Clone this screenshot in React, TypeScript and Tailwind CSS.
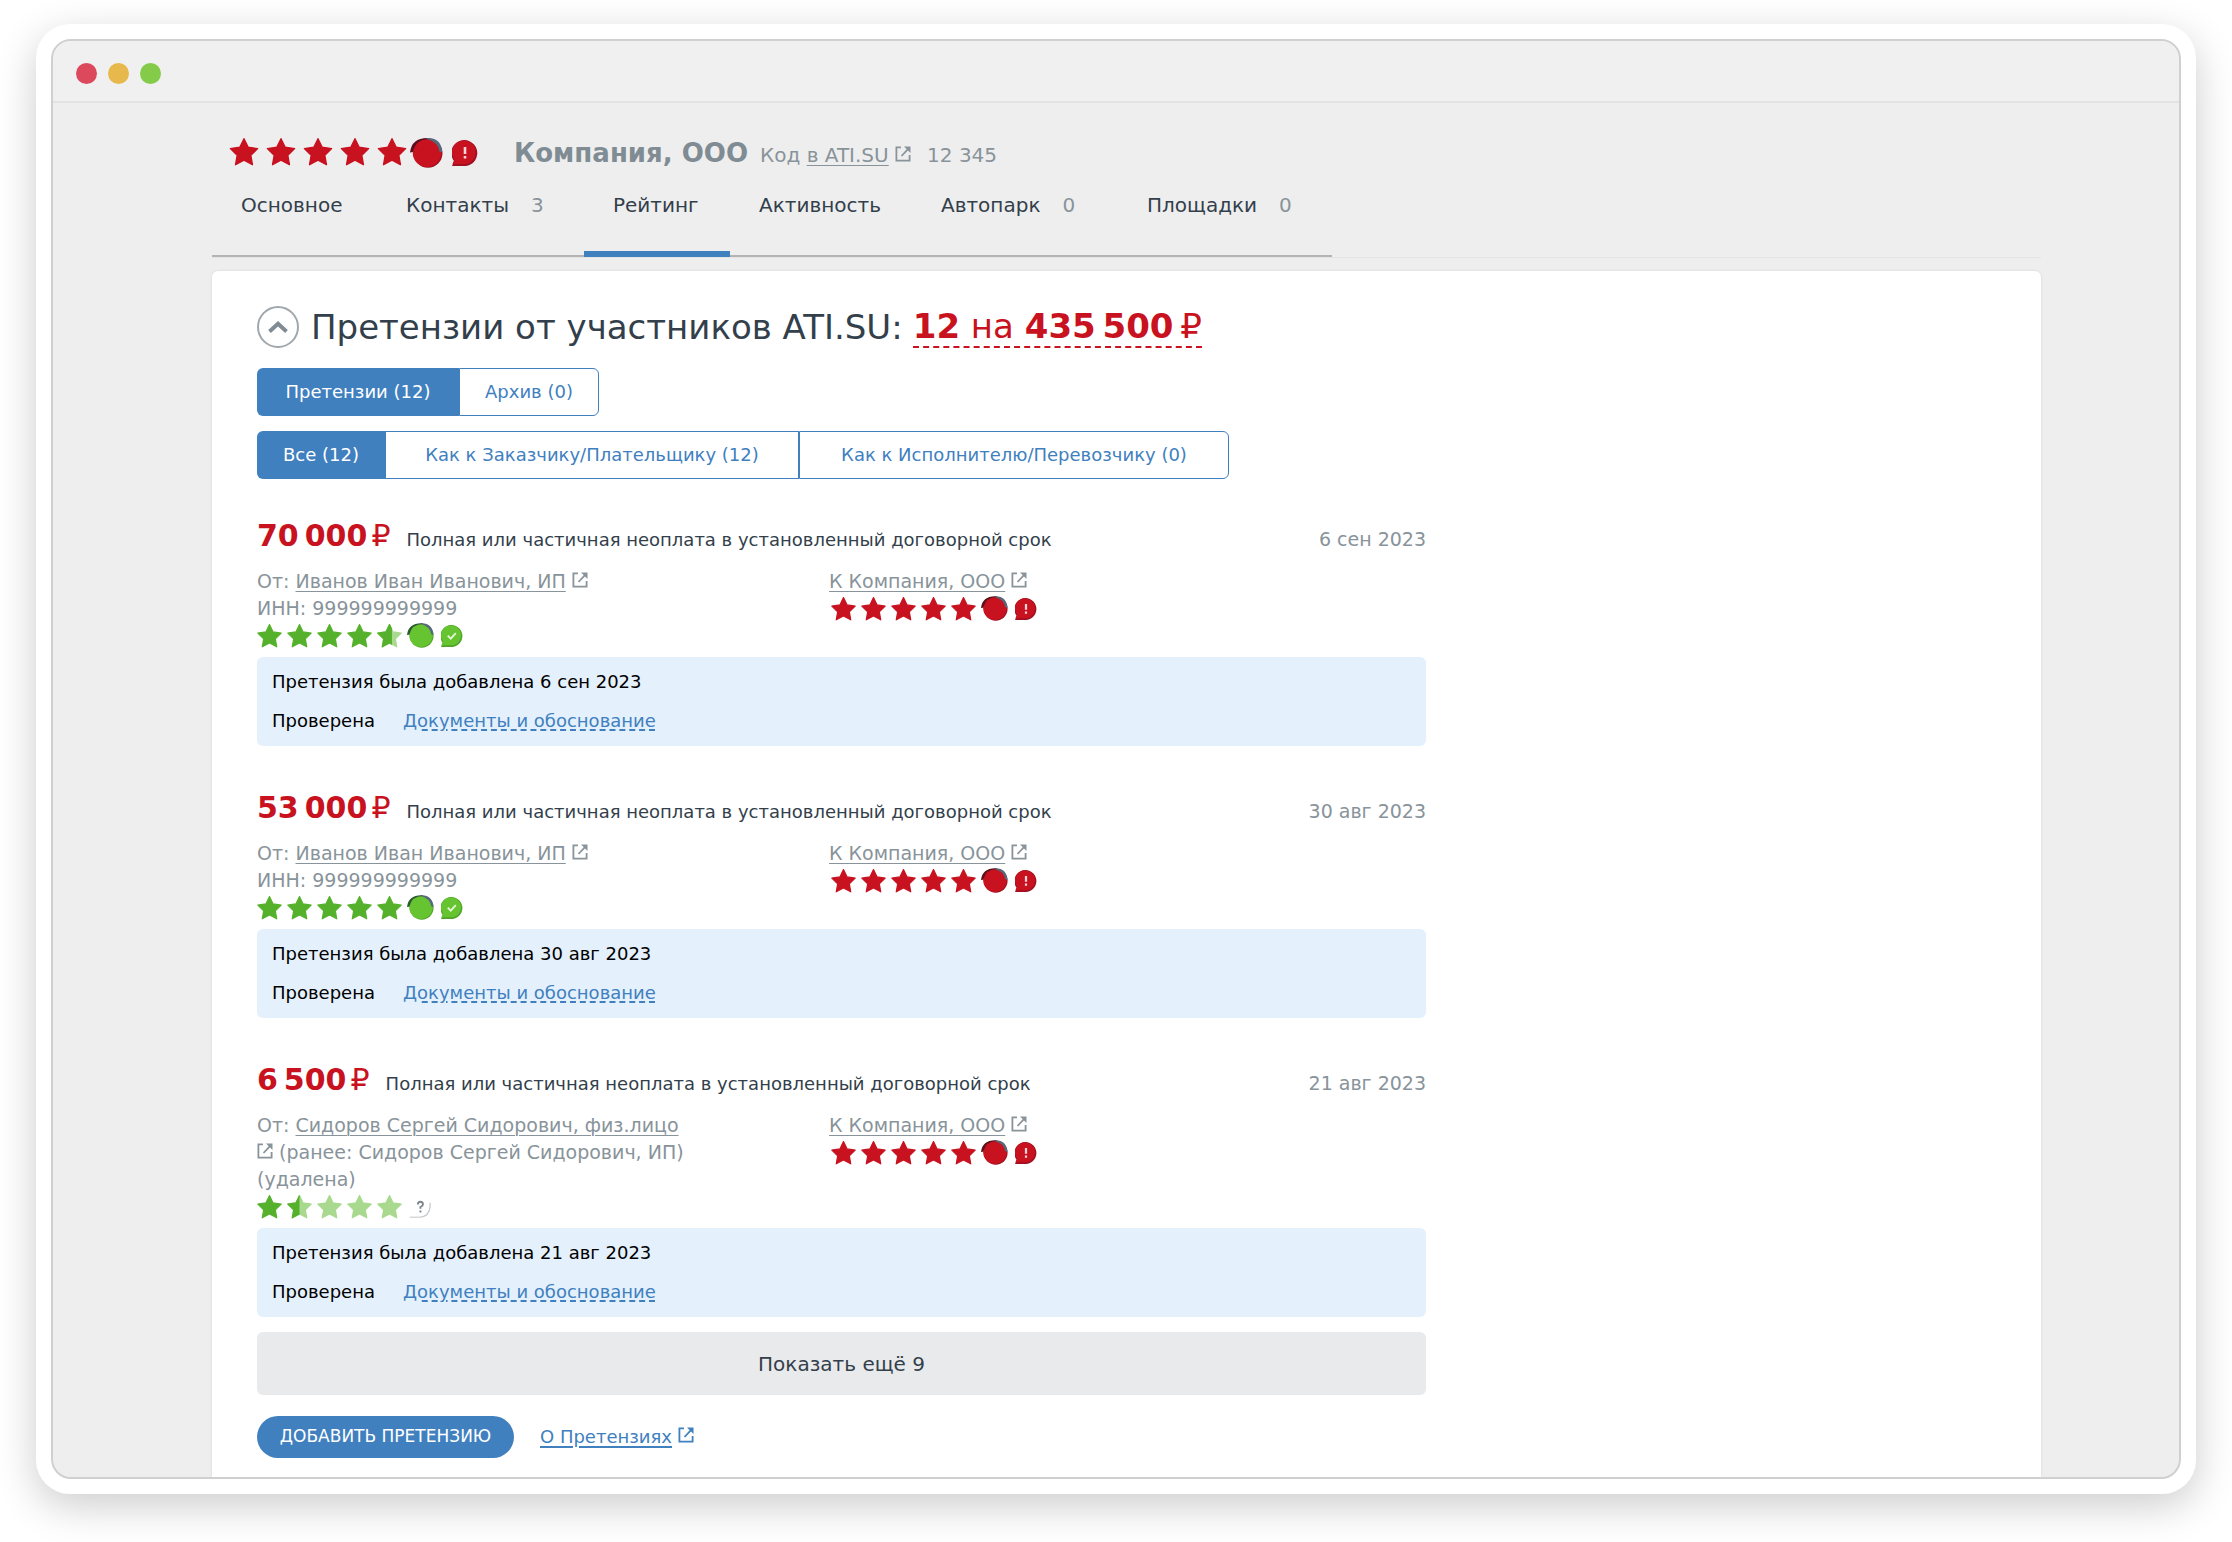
import type { ReactNode } from "react";

type Tone = "red" | "green";

type Claim = {
  amount: string;
  date: string;
  from: string;
  inn?: string;
  formerly?: string;
  stars: number[];
  verified: boolean;
};

const tabs = [
  { label: "Основное", width: "w-[165px]" },
  { label: "Контакты", count: 3, width: "w-[207px]" },
  { label: "Рейтинг", active: true, width: "w-[146px]" },
  { label: "Активность", width: "w-[182px]" },
  { label: "Автопарк", count: 0, width: "w-[206px]" },
  { label: "Площадки", count: 0, width: "w-[214px]" },
];

const claims: Claim[] = [
  {
    amount: "70\u2009000",
    date: "6 сен 2023",
    from: "Иванов Иван Иванович, ИП",
    inn: "999999999999",
    stars: [1, 1, 1, 1, 0.6],
    verified: true,
  },
  {
    amount: "53\u2009000",
    date: "30 авг 2023",
    from: "Иванов Иван Иванович, ИП",
    inn: "999999999999",
    stars: [1, 1, 1, 1, 1],
    verified: true,
  },
  {
    amount: "6\u2009500",
    date: "21 авг 2023",
    from: "Сидоров Сергей Сидорович, физ.лицо",
    formerly: "(ранее: Сидоров Сергей Сидорович, ИП) (удалена)",
    stars: [1, 0.5, 0, 0, 0],
    verified: false,
  },
];

const starPath =
  "M12 2 15.09 8.26 22 9.27 17 14.14 18.18 21.02 12 17.77 5.82 21.02 7 14.14 2 9.27 8.91 8.26Z";

function ExternalIcon() {
  return (
    <svg
      viewBox="0 0 16 16"
      className="inline-block size-4 align-baseline"
      fill="none"
      stroke="currentColor"
      strokeWidth="1.8"
      aria-hidden="true"
    >
      <path d="M6 1.4H1.4V14.6H14.6V9" />
      <path d="M6.5 10 13 3.2" />
      <path d="M9 .5H15.5V7Z" fill="currentColor" stroke="none" />
    </svg>
  );
}

function Star({ fill, tone, className }: { fill: number; tone: Tone; className: string }) {
  const color = tone === "red" ? "#c81220" : "#55b12c";
  const base = fill === 1 ? color : "#a8d98e";
  return (
    <svg viewBox="1.5 1.5 21 20.5" className={className} strokeWidth="1" strokeLinejoin="round" aria-hidden="true">
      <path d={starPath} fill={base} stroke={base} />
      {fill > 0 && fill < 1 && (
        <path
          d={starPath}
          fill={color}
          stroke={color}
          style={{ clipPath: `inset(-1px ${(1 - fill) * 100}% -1px -1px)` }}
        />
      )}
    </svg>
  );
}

function Disc({ tone, className }: { tone: Tone; className: string }) {
  const [face, shade, left] =
    tone === "red" ? ["#c81220", "#9e1020", "#5c0f1c"] : ["#66c430", "#55a52e", "#2f5a2e"];
  return (
    <svg viewBox="0 0 34 31" className={className} aria-hidden="true">
      <circle cx="18.500" cy="15.800" r="15" fill={shade} />
      <circle cx="17.500" cy="15.300" r="14.700" fill={face} />
      <path d="M0 15Q1.500 0 18 0H20V1Q6 1 3 14.500Z" fill={left} />
      <path d="M17 0Q32 -1 33.500 15L30.500 14Q29 4 17 1Z" fill="#56687c" />
    </svg>
  );
}

function Bubble({ kind, className }: { kind: "alert" | "check" | "unknown"; className: string }) {
  const [shade, face] = {
    alert: ["#a01020", "#c81220"],
    check: ["#4fa52a", "#66c430"],
    unknown: ["#c9cdd0", "#ffffff"],
  }[kind];
  return (
    <svg viewBox="0 0 26 26" className={className} aria-hidden="true">
      <path d="M0 26 2 21A13 13 0 1 1 13.500 26Z" fill={kind === "unknown" ? "none" : shade} />
      {kind === "unknown" && <path d="M1 25H13Q24 24.500 25 12V8" stroke={shade} strokeWidth="1.6" fill="none" />}
      <path d="M.5 24 2.500 19.500A11.800 11.800 0 1 1 13 24Z" fill={face} />
      {kind === "alert" && <path d="M13 7V14M13 16V18.500" stroke="#f6d5d8" strokeWidth="2.6" />}
      {kind === "check" && (
        <path d="M8 12.500 11.500 16 17.500 9.500" stroke="#e2f6d6" strokeWidth="2.2" fill="none" />
      )}
      {kind === "unknown" && (
        <path
          d="M10.500 10Q10.500 6.800 13.500 6.800T16.500 10Q16.500 11.500 13.500 13V15M13.500 17V19.500"
          stroke="#7c868c"
          strokeWidth="2.2"
          fill="none"
        />
      )}
    </svg>
  );
}

function CompanyLink({ children }: { children: ReactNode }) {
  return (
    <a href="#company" className="underline decoration-1 underline-offset-3">
      {children}
    </a>
  );
}

function ClaimCard({ claim }: { claim: Claim }) {
  return (
    <article>
      <div className="flex h-9 items-baseline">
        <h2 className="text-[30px] leading-9 font-bold text-[#c81220]">
          {claim.amount}
          <span className="ml-1 font-normal">₽</span>
        </h2>
        <p className="ml-4 text-lg text-[#333f4b]">
          Полная или частичная неоплата в установленный договорной срок
        </p>
        <time className="ml-auto text-[19px] text-[#88939a]">{claim.date}</time>
      </div>

      <div className="mt-3.5 flex text-[19px] leading-[27px] text-[#88939a]">
        <div className="w-[572px]">
          <p className="w-[440px]">
            От: <CompanyLink>{claim.from}</CompanyLink> <ExternalIcon /> {claim.formerly}
          </p>
          {claim.inn && <p>ИНН: {claim.inn}</p>}
          <div className="flex h-[27px] items-center gap-[5px]">
            {claim.stars.map((fill, i) => (
              <Star key={i} fill={fill} tone="green" className="h-6 w-[25px]" />
            ))}
            {claim.verified && <Disc tone="green" className="h-[25px] w-[27px]" />}
            <Bubble kind={claim.verified ? "check" : "unknown"} className="ml-0.5 size-[22px]" />
          </div>
        </div>
        <div>
          <p>
            <CompanyLink>К Компания, ООО</CompanyLink> <ExternalIcon />
          </p>
          <div className="flex h-[27px] items-center gap-[5px] pl-0.5">
            {[0, 1, 2, 3, 4].map((i) => (
              <Star key={i} fill={1} tone="red" className="h-6 w-[25px]" />
            ))}
            <Disc tone="red" className="h-[25px] w-[27px]" />
            <Bubble kind="alert" className="ml-0.5 size-[22px]" />
          </div>
        </div>
      </div>

      <div className="mt-2 rounded-md bg-[#e4f0fc] px-[15px] pt-[11px] pb-3 text-lg leading-[27px] text-black">
        <p>Претензия была добавлена {claim.date}</p>
        <p className="mt-3 flex gap-7">
          <span>Проверена</span>
          <a
            href="#documents"
            className="text-[#4080bf] underline decoration-dashed decoration-2 underline-offset-2"
          >
            Документы и обоснование
          </a>
        </p>
      </div>
    </article>
  );
}

function App() {
  return (
    <div className="bg-white px-9 pt-6 pb-12 font-['DejaVu_Sans',sans-serif]">
      <div className="rounded-[34px] bg-white p-[15px] shadow-[0_12px_40px_rgba(0,0,0,0.2)]">
        <div className="overflow-hidden rounded-[20px] border-2 border-[#d0d0d0] bg-[#eeeeee]">
          <div className="flex h-[62px] items-center gap-[11px] border-b-2 border-[#e3e3e3] bg-[#f0f0f0] px-[23px] pt-1">
            <span className="size-[21px] rounded-full bg-[#dc495c]" />
            <span className="size-[21px] rounded-full bg-[#e7b84c]" />
            <span className="size-[21px] rounded-full bg-[#84cb4a]" />
          </div>

          <div className="mr-[138px] ml-[159px]">
            <header className="flex h-[90px] items-baseline pt-[30px] pl-[17px] text-[#88939a]">
              <div className="flex gap-[7px] self-start pt-[5px]">
                {[0, 1, 2, 3, 4].map((i) => (
                  <Star key={i} fill={1} tone="red" className="h-7 w-[30px]" />
                ))}
                <Disc tone="red" className="-ml-1 h-[30px] w-[33px]" />
                <Bubble kind="alert" className="mt-0.5 ml-0.5 size-[26px]" />
              </div>
              <h1 className="ml-9 text-[26px] leading-10 font-bold text-[#808c93]">Компания, ООО</h1>
              <p className="ml-3 text-xl">
                Код{" "}
                <a href="#code" className="underline decoration-1 underline-offset-3">
                  в ATI.SU
                </a>{" "}
                <ExternalIcon />
                <span className="ml-4">12 345</span>
              </p>
            </header>

            <nav className="flex border-b border-[#e4e4e4]">
              {tabs.map((tab) => (
                <a
                  key={tab.label}
                  href="#tab"
                  className={`flex h-16 gap-[22px] pl-[29px] text-xl leading-6 text-[#333f4b] ${tab.width} ${
                    tab.active ? "border-b-[6px] border-[#4080bf]" : "border-b-2 border-[#b4b4b4]"
                  }`}
                >
                  {tab.label}
                  {tab.count !== undefined && <span className="text-[#88939a]">{tab.count}</span>}
                </a>
              ))}
            </nav>

            <main className="mt-[13px] rounded-t-md bg-white px-[45px] pb-[19px] shadow-[0_0_3px_rgba(0,0,0,0.1)]">
              <div className="flex items-center pt-[35px]">
                <button
                  aria-label="Свернуть"
                  className="flex size-[42px] items-center justify-center rounded-full border-2 border-[#a0a8ad] text-[#808c93]"
                >
                  <svg viewBox="0 0 20 12" className="h-3 w-5" fill="none" stroke="currentColor" strokeWidth="4">
                    <path d="M1.500 10.500 10 2.800 18.500 10.500" />
                  </svg>
                </button>
                <h2 className="ml-3 text-[34px] leading-[42px] text-[#333f4b]">Претензии от участников ATI.SU:</h2>
                <a
                  href="#total"
                  className="ml-2.5 border-b-2 border-dashed border-[#c81220] text-[34px] leading-10 text-[#c81220]"
                >
                  <b>12</b> на <b>435{"\u2009"}500</b>
                  {"\u2009"}₽
                </a>
              </div>

              <div className="mt-5 flex h-12 text-lg text-[#4080bf]">
                <button className="w-[202px] rounded-l-md bg-[#4080bf] text-white">Претензии (12)</button>
                <button className="w-[140px] rounded-r-md border border-[#4080bf]">Архив (0)</button>
              </div>
              <div className="mt-[15px] flex h-12 text-lg text-[#4080bf]">
                <button className="w-32 rounded-l-md bg-[#4080bf] text-white">Все (12)</button>
                <button className="w-[414px] border border-[#4080bf]">Как к Заказчику/Плательщику (12)</button>
                <button className="w-[430px] rounded-r-md border border-[#4080bf]">
                  Как к Исполнителю/Перевозчику (0)
                </button>
              </div>

              <div className="max-w-[1169px]">
                <div className="mt-[39px] flex flex-col gap-11">
                  {claims.map((claim) => (
                    <ClaimCard key={claim.date} claim={claim} />
                  ))}
                </div>
                <button className="mt-[15px] h-[63px] w-full rounded-md bg-[#e9eaeb] text-xl text-[#333f4b]">
                  Показать ещё 9
                </button>
              </div>

              <div className="mt-[21px] flex items-center gap-[26px]">
                <button className="h-[42px] w-[257px] rounded-full bg-[#4080bf] text-[17px] text-white">
                  ДОБАВИТЬ ПРЕТЕНЗИЮ
                </button>
                <span className="text-lg text-[#4080bf]">
                  <a href="#about" className="underline decoration-2 underline-offset-3">
                    О Претензиях
                  </a>{" "}
                  <ExternalIcon />
                </span>
              </div>
            </main>
          </div>
        </div>
      </div>
    </div>
  );
}

export default App;
